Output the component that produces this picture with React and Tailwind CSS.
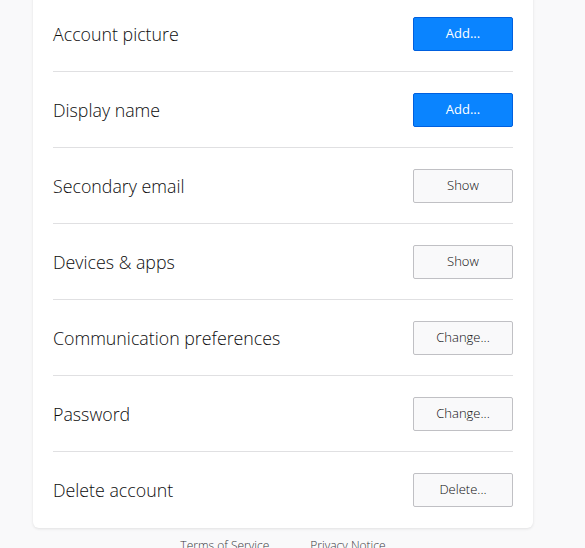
import React from "react";

const rows = [
  { label: "Account picture", btn: "Add...", primary: true },
  { label: "Display name", btn: "Add...", primary: true },
  { label: "Secondary email", btn: "Show" },
  { label: "Devices & apps", btn: "Show" },
  { label: "Communication preferences", btn: "Change..." },
  { label: "Password", btn: "Change..." },
  { label: "Delete account", btn: "Delete..." },
];

export default function App() {
  return (
    <div
      className="min-h-[548px] w-[585px] overflow-hidden bg-[#f9f9fa] text-[#0c0c0d]"
      style={{ fontFamily: "'Open Sans', sans-serif" }}
    >
      <div className="ml-[33px] mt-[-4px] w-[500px] rounded-b-[6px] bg-white px-5 shadow-[0_1px_3px_rgba(12,12,13,0.1)]">
        {rows.map((r, i) => (
          <div
            key={r.label}
            className={`flex h-[76px] items-center justify-between ${
              i < rows.length - 1 ? "border-b border-[#e0e0e2]" : ""
            }`}
          >
            <span className="pt-[1px] text-[17.8px] font-light text-[#0c0c0d]">{r.label}</span>
            <button
              className={
                r.primary
                  ? "h-[34px] w-[100px] rounded-[2px] border border-[#0060df] bg-[#0a84ff] text-[13px] text-white"
                  : "h-[34px] w-[100px] rounded-[2px] border border-[#c0c0c4] bg-[#f9f9fa] text-[13px] font-light text-[#0c0c0d]"
              }
            >
              {r.btn}
            </button>
          </div>
        ))}
      </div>
      <div className="ml-[33px] mt-[9px] flex w-[500px] justify-center gap-[41px] text-[12px] font-light text-[#38383d]">
        <span>Terms of Service</span>
        <span>Privacy Notice</span>
      </div>
    </div>
  );
}
